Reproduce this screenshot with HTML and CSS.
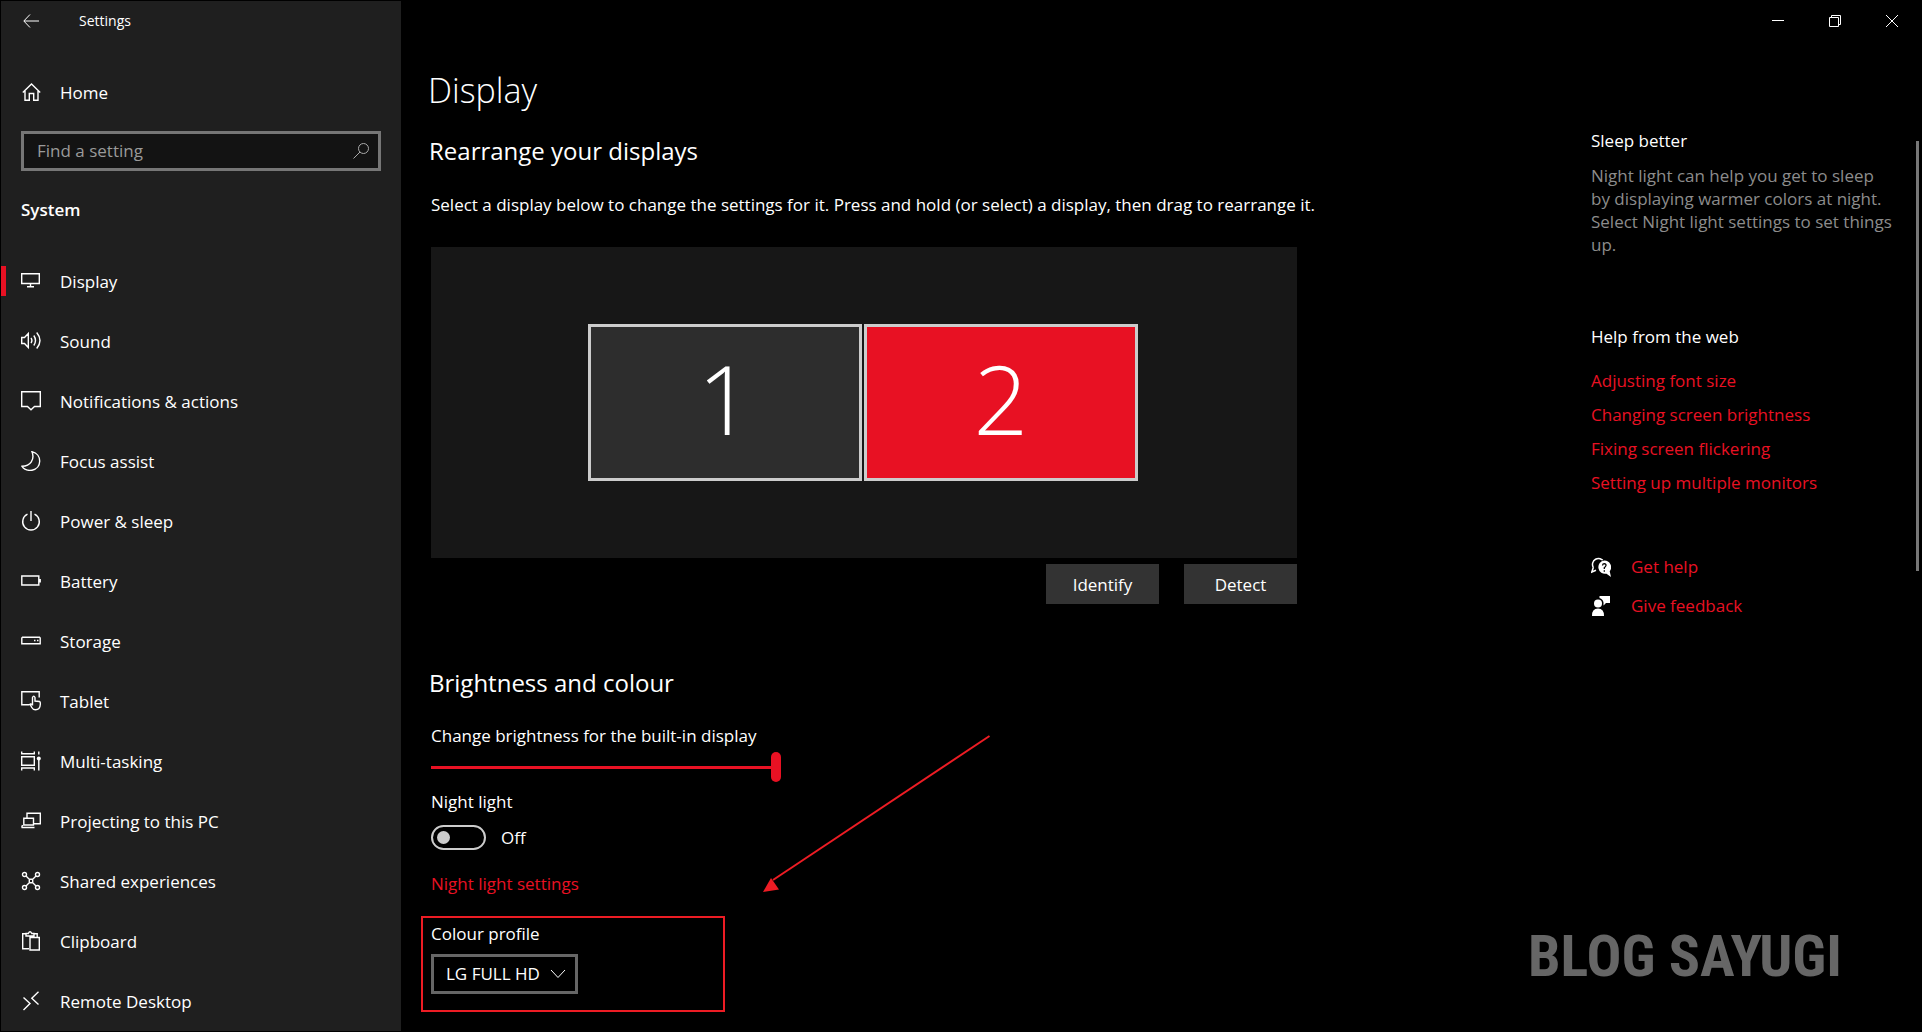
FILE: index.html
```html
<!DOCTYPE html>
<html lang="en">
	<head>
		<meta charset="utf-8">
		<title>Settings</title>
		<link rel="stylesheet" href="styles.css">
	</head>

	<body>
		<div class="sidebar">
			<header class="titlebar">
				<button class="back" aria-label="Back">
					<svg width="20" height="20" viewBox="0 0 20 20"><path d="M17 10H2M8 3.5L1.8 10L8 16.500"/></svg>
				</button>
				<span>Settings</span>
			</header>

			<a href="#" class="nav-item home">
				<svg width="20" height="20" viewBox="0 0 20 20"><path d="M1.800 10.500L10.500 2L19.200 10.500M4 9V18.300H8.300V11.500H12.700V18.300H17V9"/></svg>
				Home
			</a>

			<div class="search">
				<input type="text" placeholder="Find a setting" aria-label="Find a setting">
				<svg width="20" height="20" viewBox="0 0 20 20"><circle cx="12.500" cy="7.500" r="5"/><path d="M9 11L2.500 17.500"/></svg>
			</div>

			<h2 class="group">System</h2>

			<nav>
				<a href="#" class="nav-item active">
					<svg width="20" height="20" viewBox="0 0 20 20"><path d="M.7 2.700H18.300V12.500H.7ZM9.500 12.500V15.500M6 15.800H13"/></svg>
					Display
				</a>
				<a href="#" class="nav-item">
					<svg width="20" height="20" viewBox="0 0 20 20"><path d="M.7 6.500H3.500L7.300 2.500V16.500L3.500 12.500H.7ZM10 7Q11.800 9.500 10 12M12.800 4.500Q16.200 9.500 12.800 14.500M15.700 1.500Q22.300 9.500 15.700 17.500"/></svg>
					Sound
				</a>
				<a href="#" class="nav-item">
					<svg width="20" height="20" viewBox="0 0 20 20"><path d="M.7 .8H19.300V15.500H13.500L10 18.800L6.500 15.500H.7Z"/></svg>
					Notifications &amp; actions
				</a>
				<a href="#" class="nav-item">
					<svg width="20" height="20" viewBox="0 0 20 20"><path d="M11 .8C21.500 3 21 17.500 11 19.200C7 19.800 3.200 18.500 1 15.300C9.500 15 14 8.500 11 .8Z"/></svg>
					Focus assist
				</a>
				<a href="#" class="nav-item">
					<svg width="20" height="20" viewBox="0 0 20 20"><path d="M10 0V10M6.500 3.200A8.300 8.300 0 1 0 13.500 3.200"/></svg>
					Power &amp; sleep
				</a>
				<a href="#" class="nav-item">
					<svg width="20" height="20" viewBox="0 0 20 20"><path d="M.8 5H17.800V14H.8ZM19.200 8V11.500"/></svg>
					Battery
				</a>
				<a href="#" class="nav-item">
					<svg width="20" height="20" viewBox="0 0 20 20"><path d="M1.500 6.200H18.500L19.200 7V12.800H.8V7ZM13 9.500H14.500M16 9.500H17.500"/></svg>
					Storage
				</a>
				<a href="#" class="nav-item">
					<svg width="20" height="20" viewBox="0 0 20 20"><path d="M8.500 13.800H.8V.8H18.200V6.500M11.500 14.500V6.500Q12.700 3.800 14 6.500V10L18.500 10.500Q19.600 11 19.300 13.500Q19 18.700 14.500 18.800Q12 18.800 10.800 16.500L9 13.200Q9.500 12.200 11.500 14"/></svg>
					Tablet
				</a>
				<a href="#" class="nav-item">
					<svg width="20" height="20" viewBox="0 0 20 20"><path d="M.7 .5V2.800H13.300V.5M.7 5.800H13.300V14.200H.7ZM.7 19.500V17H13.300V19.500M17.800 .5V3.500M17.800 9V19.500"/><circle class="solid" cx="17.800" cy="7.500" r="2"/></svg>
					Multi-tasking
				</a>
				<a href="#" class="nav-item">
					<svg width="20" height="20" viewBox="0 0 20 20"><path d="M6 6.500V2.200H19.300V12.800H13M2.800 7.200H12.500V14H2.800ZM.5 16.500H13.500M1.500 14L.7 16.500"/></svg>
					Projecting to this PC
				</a>
				<a href="#" class="nav-item">
					<svg width="20" height="20" viewBox="0 0 20 20"><path d="M5 5L8.500 8.500M15 5L11.500 8.500M5 15L8.500 11.500M15 15L11.500 11.500M8.300 8.300H11.700V11.700H8.300Z"/><circle cx="3.500" cy="3.500" r="2"/><circle cx="16.500" cy="3.500" r="2"/><circle cx="3.500" cy="16.500" r="2"/><circle cx="16.500" cy="16.500" r="2"/></svg>
					Shared experiences
				</a>
				<a href="#" class="nav-item">
					<svg width="20" height="20" viewBox="0 0 20 20"><path d="M8 17.800H1.700V2.800H5M13 2.800H16.200V6M5 5V2.500H7.300Q9 -1 10.800 2.500H13V5ZM9 6.500H18.300V19H9Z"/></svg>
					Clipboard
				</a>
				<a href="#" class="nav-item">
					<svg width="20" height="20" viewBox="0 0 20 20"><path d="M2.500 6.500L9 12.500L2.500 19M17.500 .8L10.800 7.300L17.500 13.500"/></svg>
					Remote Desktop
				</a>
			</nav>
		</div>

		<main>
			<div class="window-buttons">
				<button aria-label="Minimise"><svg width="14" height="14" viewBox="0 0 14 14"><path d="M1 6.500H13"/></svg></button>
				<button aria-label="Restore"><svg width="14" height="14" viewBox="0 0 14 14"><path d="M1.500 3.500H10.500V12.500H1.500ZM3.500 3.500V1.500H12.500V10.500H10.500"/></svg></button>
				<button aria-label="Close"><svg width="14" height="14" viewBox="0 0 14 14"><path d="M1 1L13 13M13 1L1 13"/></svg></button>
			</div>

			<div class="columns">
				<div class="content">
					<h1>Display</h1>

					<section>
						<h2>Rearrange your displays</h2>
						<p class="hint">Select a display below to change the settings for it. Press and hold (or select) a display, then drag to rearrange it.</p>
						<div class="arrange">
							<button class="screen">1</button>
							<button class="screen selected">2</button>
						</div>
						<div class="actions">
							<button>Identify</button>
							<button>Detect</button>
						</div>
					</section>

					<section class="brightness">
						<h2>Brightness and colour</h2>
						<label for="brightness">Change brightness for the built-in display</label>
						<input type="range" id="brightness" min="0" max="100" value="100">

						<label for="night">Night light</label>
						<div class="toggle">
							<input type="checkbox" id="night" role="switch">
							<span>Off</span>
						</div>
						<a href="#" class="night-link">Night light settings</a>

						<div class="profile">
							<label for="profile">Colour profile</label>
							<div class="select">
								<select id="profile">
									<option>LG FULL HD</option>
								</select>
								<svg width="16" height="10" viewBox="0 0 16 10"><path d="M1 1L8 8.500L15 1"/></svg>
							</div>
						</div>

						<svg class="arrow" width="228" height="158" viewBox="0 0 228 158"><path d="M226.500 1L10 145"/><polygon points="0,157 8,143 16,154.500"/></svg>
					</section>
				</div>

				<aside>
					<h3>Sleep better</h3>
					<p>Night light can help you get to sleep by displaying warmer colors at night. Select Night light settings to set things up.</p>

					<h3>Help from the web</h3>
					<ul>
						<li><a href="#">Adjusting font size</a></li>
						<li><a href="#">Changing screen brightness</a></li>
						<li><a href="#">Fixing screen flickering</a></li>
						<li><a href="#">Setting up multiple monitors</a></li>
					</ul>

					<div class="support">
						<a href="#">
							<svg width="20" height="20" viewBox="0 0 20 20"><path class="line" d="M2.300 10.500A6 6 0 1 1 12.800 4.500M2.300 10.500L.8 15L5 13.300"/><path class="bubble" d="M13.300 3.500A6.700 6.700 0 0 1 18.700 14.300L20 20L15.500 16.700A6.700 6.700 0 1 1 13.300 3.500Z"/><path class="mark" d="M11.500 8.500Q11.700 6.700 13.300 6.700Q15.200 6.900 15 8.500Q14.800 9.600 13.300 10.700V12M13.300 13.300V14.800"/></svg>
							Get help
						</a>
						<a href="#">
							<svg width="20" height="20" viewBox="0 0 20 20"><path d="M8.500 0H19V7H15L12.500 9.500V6.500Q12 3 8.500 2Z"/><circle cx="7" cy="7.500" r="4"/><path d="M1 20Q.8 12.500 7 12.500Q13.200 12.500 13 20Z"/></svg>
							Give feedback
						</a>
					</div>
				</aside>
			</div>
		</main>

		<div class="scroll-thumb"></div>
		<div class="watermark">BLOG SAYUGI</div>
	</body>
</html>
```
FILE: styles.css
```css
* {
	box-sizing: border-box;
}
body {
	background-color: #000;
	color: #fff;
	display: flex;
	font: 17px/24px "Open Sans", "Noto Sans", sans-serif;
	height: 100vh;
	margin: 0;
	overflow: hidden;
	padding: 1px;
}
h1, h2, h3, p, ul {
	font-weight: 400;
	margin: 0;
	padding: 0;
}
a {
	color: #e81123;
	text-decoration: none;
}
button {
	background: none;
	border: 0;
	color: inherit;
	font: inherit;
	padding: 0;
}
svg {
	display: block;
	fill: none;
	flex: none;
	stroke: #fff;
}

/* Left pane */
.sidebar {
	background-color: #1f1f1f;
	flex: none;
	overflow: hidden;
	width: 400px;
}
.titlebar {
	align-items: center;
	display: flex;
	font-size: 14px;
	gap: 37px;
	height: 40px;
	padding-left: 21px;
}
.nav-item {
	align-items: center;
	color: #fff;
	display: flex;
	gap: 19px;
	height: 60px;
	padding: 2px 0 0 20px;
}
.nav-item svg {
	margin-bottom: 2px;
	stroke-width: 1.4;
}
.nav-item .solid {
	fill: #fff;
	stroke: none;
}
.home {
	margin: 21px 0 9px;
}
.active {
	border-left: 5px solid #e81123;
	border-image: linear-gradient(transparent 15px, #e81123 15px, #e81123 45px, transparent 45px) 0 0 0 5;
	padding-left: 15px;
}
.search {
	align-items: center;
	background-color: #131313;
	border: 3px solid #767676;
	display: flex;
	height: 40px;
	margin: 0 20px;
	padding: 0 7px 0 13px;
}
.search input {
	background: none;
	border: 0;
	color: #fff;
	flex: 1;
	font: inherit;
	min-width: 0;
	outline: 0;
	padding: 0;
}
.search input::placeholder {
	color: #9a9a9a;
}
.search svg {
	stroke: #aaa;
}
.group {
	font-size: 17px;
	font-weight: 600;
	margin: 27px 20px 29px;
}

/* Right side */
main {
	flex: 1;
	min-width: 0;
}
.window-buttons {
	display: flex;
	height: 40px;
	justify-content: flex-end;
	padding-right: 1px;
}
.window-buttons button {
	display: grid;
	place-items: center;
	width: 57px;
}
.columns {
	display: flex;
	justify-content: space-between;
	padding: 27px 26px 0 30px;
}
.content {
	flex: 0 1 866px;
	min-width: 0;
}
h1 {
	font-size: 34px;
	font-weight: 300;
	line-height: 44px;
	margin-left: -3px;
}
.content h2 {
	font-size: 24px;
	line-height: 32px;
	margin-left: -2px;
}
section h2 {
	margin-top: 23px;
}
.hint {
	margin-top: 26px;
	white-space: nowrap;
}
.arrange {
	background-color: #171717;
	display: flex;
	gap: 2px;
	justify-content: center;
	margin-top: 30px;
	padding: 77px 2px 77px 0;
}
.screen {
	background-color: #2d2d2d;
	border: 3px solid #ccc;
	font-size: 96px;
	font-weight: 300;
	height: 157px;
	line-height: 140px;
	padding-bottom: 10px;
	width: 274px;
}
.selected {
	background-color: #e81123;
}
.actions {
	display: flex;
	gap: 25px;
	justify-content: flex-end;
	margin-top: 6px;
}
.actions button {
	background-color: #333;
	height: 40px;
	padding-top: 2px;
	width: 113px;
}

.brightness {
	margin-top: 63px;
	position: relative;
}
.brightness label {
	display: block;
}
.brightness h2 {
	margin-bottom: 25px;
}
input[type="range"] {
	appearance: none;
	background: linear-gradient(#e81123, #e81123) center / 100% 3px no-repeat;
	display: block;
	height: 30px;
	margin: 4px 0 8px;
	width: 350px;
}
input[type="range"]::-webkit-slider-thumb {
	appearance: none;
	background-color: #e81123;
	border-radius: 5px;
	height: 30px;
	width: 10px;
}
.toggle {
	align-items: center;
	display: flex;
	gap: 15px;
	margin: 11px 0 22px;
}
.toggle input {
	appearance: none;
	border: 2px solid #ccc;
	border-radius: 13px;
	height: 25px;
	margin: 0;
	padding: 4px;
	width: 55px;
}
.toggle input::before {
	background-color: #ccc;
	border-radius: 50%;
	content: "";
	display: block;
	height: 13px;
	width: 13px;
}
.toggle input:checked::before {
	margin-left: auto;
}
.night-link {
	display: block;
}
.profile {
	border: 2px solid #ed1c24;
	height: 96px;
	margin: 20px 0 0 -10px;
	padding: 4px 8px;
	width: 304px;
}
.select {
	display: inline-grid;
	margin-top: 8px;
}
.select select, .select svg {
	grid-area: 1 / 1;
}
.select select {
	appearance: none;
	background-color: #000;
	border: 3px solid #666;
	border-radius: 0;
	color: #fff;
	font: inherit;
	height: 40px;
	padding: 0 35px 0 12px;
}
.select svg {
	align-self: center;
	justify-self: end;
	margin-right: 12px;
	pointer-events: none;
}
/* pointer from the free area down to the profile box */
.arrow {
	fill: #ed1c24;
	left: 332px;
	position: absolute;
	stroke: #ed1c24;
	stroke-width: 2;
	top: 68px;
}
.arrow polygon {
	stroke: none;
}

aside {
	flex: 0 0 304px;
	padding-top: 61px;
}
aside h3 {
	font-size: 17px;
}
aside p {
	color: #8c8c8c;
	line-height: 23px;
	margin: 11px 0 69px;
}
aside ul {
	display: grid;
	gap: 10px;
	list-style: none;
	margin: 20px 0 60px;
}
.support {
	display: grid;
	gap: 15px;
}
.support a {
	align-items: center;
	display: flex;
	gap: 20px;
}
.support svg {
	fill: #fff;
	stroke: none;
}
.support .line {
	fill: none;
	stroke: #fff;
	stroke-width: 1.5;
}
.support .bubble {
	paint-order: stroke;
	stroke: #000;
	stroke-width: 1.5;
}
.support .mark {
	fill: none;
	stroke: #000;
	stroke-width: 1.3;
}

.scroll-thumb {
	background-color: #777;
	height: 430px;
	position: absolute;
	right: 3px;
	top: 141px;
	width: 3px;
}
.watermark {
	bottom: 36px;
	color: #666;
	font: 700 58px/80px "Roboto Condensed", "Liberation Sans Narrow", sans-serif;
	position: absolute;
	right: 80px;
	white-space: nowrap;
}
```
